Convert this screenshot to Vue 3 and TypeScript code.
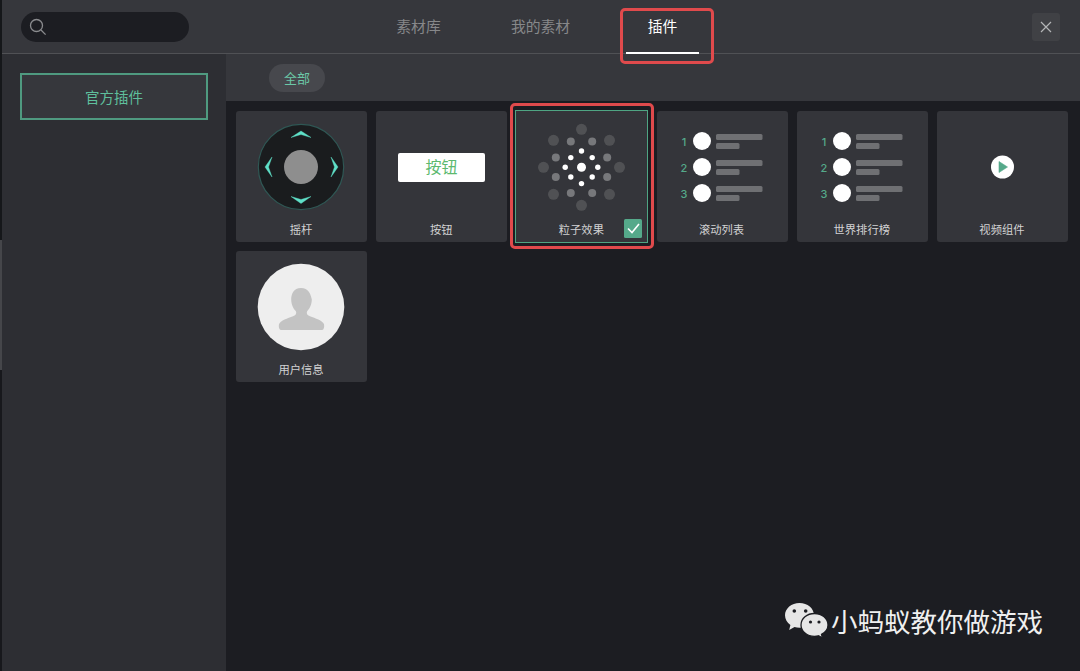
<template>
  <div class="app">
    <header class="topbar">
      <div class="search">
        <svg width="18" height="18" viewBox="0 0 18 18" fill="none" stroke="#8a8b8e" stroke-width="1.3">
          <circle cx="7.5" cy="7.5" r="6" />
          <path d="M12 12l4.600 4.600" />
        </svg>
      </div>
      <nav class="tabs">
        <div v-for="tab in tabs" :key="tab" class="tab" :class="{ active: tab === activeTab }">{{ tab }}</div>
      </nav>
      <button class="close">
        <svg width="12" height="12" viewBox="0 0 12 12" stroke="#b4b5b7" stroke-width="1.2">
          <path d="M1 1l10 10M11 1L1 11" />
        </svg>
      </button>
    </header>

    <div class="body">
      <aside class="sidebar">
        <div class="side-btn">官方插件</div>
      </aside>
      <main class="main">
        <div class="filter">
          <span class="pill">全部</span>
        </div>
        <div class="grid">
          <div v-for="card in cards" :key="card.name" class="card" :class="{ selected: card.kind === 'particle' }">
            <svg class="art" width="131" height="106" viewBox="0 0 131 106">
              <template v-if="card.kind === 'stick'">
                <circle cx="65" cy="56" r="42.700" fill="#1a1c1e" stroke="#2f5754" stroke-width="1.2" />
                <circle cx="65" cy="56" r="17" fill="#8e8e8e" />
                <path d="M55 26.500L65 20l10 6.500-10-3z M55 85.500l10 3 10-3L65 92.500z M36 46l-7 10 7 10-3.500-10z M95 46l7 10-7 10 3.500-10z"
                  fill="#5fe0c8" stroke="#5fe0c8" stroke-width="0.4" stroke-linejoin="round" />
              </template>

              <template v-else-if="card.kind === 'button'">
                <rect x="22" y="42" width="87" height="29" rx="2" fill="#fff" />
                <text x="65.500" y="62" text-anchor="middle" class="btn-text">按钮</text>
              </template>

              <template v-else-if="card.kind === 'particle'">
                <circle v-for="(p, i) in particles" :key="i" :cx="65.500 + p.x" :cy="56.300 + p.y" :r="p.r" :fill="p.c" />
              </template>

              <template v-else-if="card.kind === 'list'">
                <g v-for="n in 3" :key="n">
                  <text x="27" :y="34.500 + (n - 1) * 26" text-anchor="middle" class="rank">{{ n }}</text>
                  <circle cx="45" :cy="30 + (n - 1) * 26" r="9" fill="#fff" />
                  <rect x="59" :y="23 + (n - 1) * 26" width="46.500" height="6" rx="1.500" fill="#6f7073" />
                  <rect x="59" :y="32 + (n - 1) * 26" width="23.500" height="6" rx="1.500" fill="#6f7073" />
                </g>
              </template>

              <template v-else-if="card.kind === 'video'">
                <circle cx="65.500" cy="56" r="11.500" fill="#fff" />
                <path d="M62 50.500l8.500 5.500-8.500 5.500z" fill="#55a98a" stroke="#55a98a" stroke-width="0.6" stroke-linejoin="round" />
              </template>

              <template v-else-if="card.kind === 'user'">
                <circle cx="65" cy="56" r="43.300" fill="#eeeeee" />
                <path d="M65 37c-7.500 0-9.800 6-9.800 11.500 0 5 2.200 9.300 4.500 11.500 .8 .8 .8 3.400-.7 4.300-5 2.700-12 3.800-15.500 8-1 1.300-1 4.700 .3 6.100 .6 .5 1.400 .6 2 .6h39.400c.6 0 1.400-.1 2-.6 1.300-1.400 1.300-4.800 .3-6.100-3.500-4.200-10.500-5.300-15.500-8-1.500-.9-1.500-3.500-.7-4.300 2.300-2.200 4.500-6.500 4.500-11.500C74.800 43 72.500 37 65 37z"
                  fill="#c3c3c3" />
              </template>
            </svg>
            <span class="label">{{ card.name }}</span>
            <span v-if="card.kind === 'particle'" class="check">
              <svg width="13" height="11" viewBox="0 0 13 11" fill="none" stroke="#fff" stroke-width="1.6">
                <path d="M1 5.500l4 4L12 1" />
              </svg>
            </span>
          </div>
        </div>
      </main>
    </div>

    <!-- annotations and bits of the capture that lie over the page -->
    <div class="edge"></div>
    <div class="mark mark-tab"></div>
    <div class="mark mark-card"></div>

    <div class="watermark">
      <svg width="44" height="36" viewBox="0 0 44 36">
        <path d="M14.500 0C6.500 0 0 5.500 0 12.300c0 3.900 2.100 7.300 5.400 9.600L4.200 27l5.300-2.900c1.600 .4 3.300 .7 5 .7 8 0 14.500-5.600 14.500-12.500S22.500 0 14.500 0z" fill="#e6e6e6" />
        <circle cx="9.300" cy="8" r="1.800" fill="#1c1d22" />
        <circle cx="20.700" cy="8" r="1.800" fill="#1c1d22" />
        <path d="M29.500 10.500c-7.500 0-13.500 5.100-13.500 11.400s6 11.400 13.500 11.400c1.400 0 2.700-.2 4-.5l4 2.200-1-3.700c3.800-2 6.500-5.500 6.500-9.400 0-6.300-6-11.400-13.500-11.400z" fill="#e6e6e6" stroke="#1c1d22" stroke-width="1.300" />
        <circle cx="25.500" cy="19" r="1.600" fill="#1c1d22" />
        <circle cx="34" cy="19" r="1.600" fill="#1c1d22" />
      </svg>
      <span>小蚂蚁教你做游戏</span>
    </div>
  </div>
</template>

<script setup lang="ts">
type CardKind = 'stick' | 'button' | 'particle' | 'list' | 'video' | 'user'

interface Particle {
  x: number
  y: number
  r: number
  c: string
}

const tabs = ['素材库', '我的素材', '插件']
const activeTab = '插件'

const cards: { name: string; kind: CardKind }[] = [
  { name: '摇杆', kind: 'stick' },
  { name: '按钮', kind: 'button' },
  { name: '粒子效果', kind: 'particle' },
  { name: '滚动列表', kind: 'list' },
  { name: '世界排行榜', kind: 'list' },
  { name: '视频组件', kind: 'video' },
  { name: '用户信息', kind: 'user' },
]

function mirrored(x: number, y: number, r: number, c: string): Particle[] {
  const out: Particle[] = []
  for (const sx of x === 0 ? [1] : [-1, 1]) {
    for (const sy of y === 0 ? [1] : [-1, 1]) {
      out.push({ x: sx * x, y: sy * y, r, c })
    }
  }
  return out
}

const particles: Particle[] = [
  { x: 0, y: 0, r: 4.5, c: '#fff' },
  ...mirrored(0, 16.3, 2.7, '#fff'),
  ...mirrored(16.3, 0, 2.7, '#fff'),
  ...mirrored(10.7, 9.7, 2.7, '#fff'),
  ...mirrored(25.7, 9.7, 4, '#77787b'),
  ...mirrored(10.7, 25.7, 4, '#77787b'),
  ...mirrored(0, 38, 5.5, '#505154'),
  ...mirrored(38, 0, 5.5, '#505154'),
  ...mirrored(28, 27, 5.5, '#505154'),
]
</script>

<style scoped>
.app {
  position: relative;
  width: 1080px;
  height: 671px;
  overflow: hidden;
  display: flex;
  flex-direction: column;
  font-family: "Noto Sans CJK SC", "Liberation Sans", sans-serif;
  background: #1c1d22;
}

.topbar {
  display: flex;
  align-items: center;
  height: 53px;
  padding: 0 20px 0 21px;
  background: #36373c;
  border-bottom: 1px solid #505155;
}

.search {
  display: flex;
  align-items: center;
  width: 168px;
  height: 30px;
  padding-left: 8px;
  box-sizing: border-box;
  border-radius: 15px;
  background: #1c1d22;
}

.tabs {
  display: flex;
  align-self: stretch;
  gap: 49px;
  margin-left: 193px;
}

.tab {
  width: 73px;
  line-height: 52px;
  margin-bottom: -1px;
  text-align: center;
  font-size: 14.800px;
  color: #87888a;
  box-sizing: border-box;
}

.tab.active {
  color: #fff;
  border-bottom: 2px solid #fff;
}

.close {
  display: flex;
  align-items: center;
  justify-content: center;
  width: 28px;
  height: 28px;
  margin-left: auto;
  padding: 0;
  border: 0;
  border-radius: 3px;
  background: #404145;
}

.body {
  flex: 1;
  display: flex;
  min-height: 0;
}

.sidebar {
  width: 226px;
  padding: 19px 18px 0 20px;
  box-sizing: border-box;
  background: #2d2e33;
}

.side-btn {
  height: 47px;
  line-height: 43px;
  text-align: center;
  font-size: 14.500px;
  color: #5fbf9c;
  background: #36373c;
  border: 2px solid #4f9a80;
  box-sizing: border-box;
}

.main {
  flex: 1;
  display: flex;
  flex-direction: column;
}

.filter {
  display: flex;
  align-items: center;
  height: 47px;
  padding-left: 43px;
  background: #36373c;
}

.pill {
  width: 56px;
  height: 28px;
  line-height: 27px;
  text-align: center;
  font-size: 13px;
  color: #6cc8a8;
  border-radius: 14px;
  background: #47484d;
}

.grid {
  display: grid;
  grid-template-columns: repeat(6, 131px);
  column-gap: 9.200px;
  row-gap: 9px;
  padding: 10px 0 0 10px;
}

.card {
  position: relative;
  height: 131px;
  border-radius: 3px;
  background: #34353a;
}

.card.selected {
  outline: 1px solid #4fa583;
  border-radius: 0;
}

.art {
  display: block;
}

.label {
  display: block;
  margin-top: 3px;
  margin-right: 1px;
  line-height: 18px;
  text-align: center;
  font-size: 11.300px;
  color: #d2d2d3;
}

.btn-text {
  font-size: 16px;
  fill: #5cb96f;
}

.rank {
  font-family: Inter, "Liberation Sans", sans-serif;
  font-size: 11px;
  font-weight: 500;
  fill: #55a98a;
}

.check {
  position: absolute;
  right: 5px;
  bottom: 4.500px;
  display: flex;
  align-items: center;
  justify-content: center;
  width: 18.500px;
  height: 18.500px;
  border-radius: 1.500px;
  background: #55a98a;
}

.edge {
  position: absolute;
  left: 0;
  top: 0;
  width: 2px;
  height: 671px;
  background: linear-gradient(#15171a 0 240px, #45464a 240px 370px, #17181c 370px);
}

.mark {
  position: absolute;
  border: 3px solid #e04a4c;
  border-radius: 5px;
  box-sizing: border-box;
  pointer-events: none;
}

.mark-tab {
  left: 620px;
  top: 8px;
  width: 94px;
  height: 56px;
}

.mark-card {
  left: 509.500px;
  top: 103px;
  width: 144.500px;
  height: 146px;
}

.watermark {
  position: absolute;
  left: 785px;
  top: 602px;
  display: flex;
  align-items: center;
  gap: 2px;
  font-size: 26.500px;
  line-height: 38px;
  color: #f0f0f0;
  white-space: nowrap;
}
</style>

<style>
html,
body {
  margin: 0;
  background: #1c1d22;
}
</style>
